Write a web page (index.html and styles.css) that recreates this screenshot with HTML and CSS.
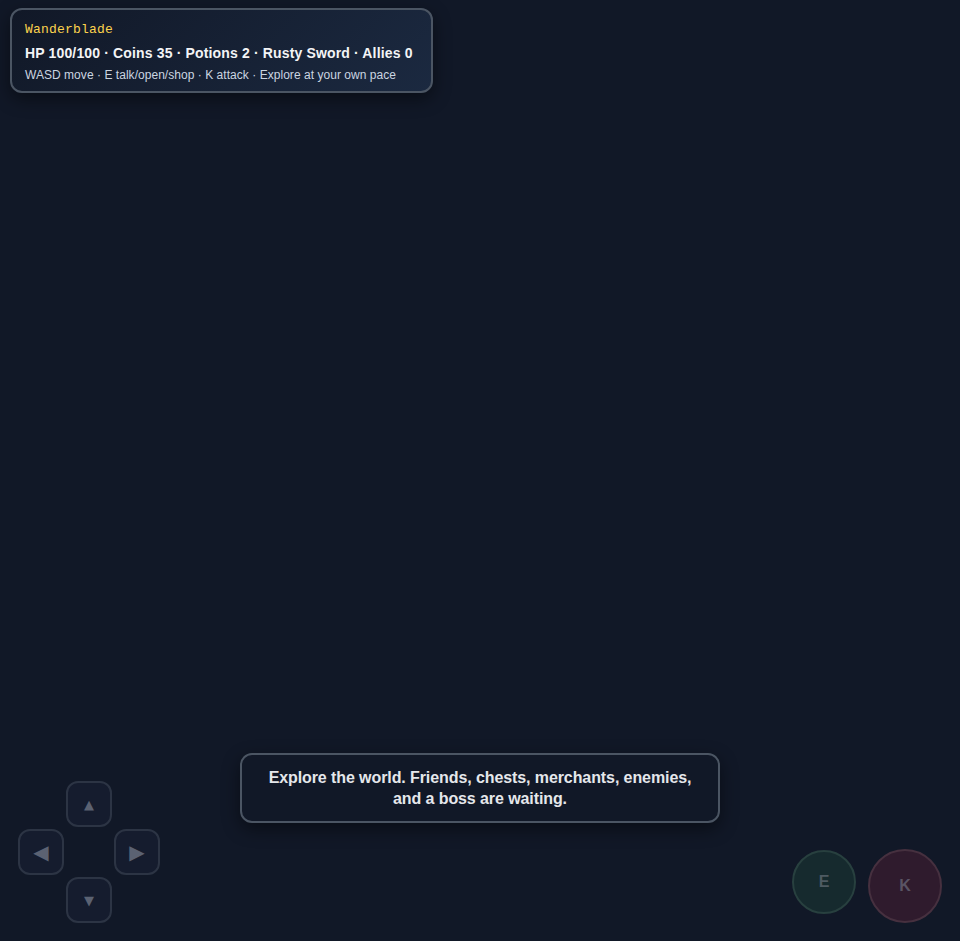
FILE: index.html
```html
<!DOCTYPE html>
<html lang="en">

<head>
    <meta charset="UTF-8" />
    <title>Wanderblade</title>
    <link rel="stylesheet" href="styles.css">
</head>

<body>

    <div class="game">
        <div class="hud">
            <div class="hud-title">Wanderblade</div>
            <div class="hud-stats">HP 100/100 · Coins 35 · Potions 2 · Rusty Sword · Allies 0</div>
            <div class="hud-help">WASD move · E talk/open/shop · K attack · Explore at your own pace</div>
        </div>

        <div class="message">Explore the world. Friends, chests, merchants, enemies,<br>and a boss are waiting.</div>

        <div class="dpad">
            <button class="pad up small">▲</button>
            <button class="pad left">◀</button>
            <button class="pad right">▶</button>
            <button class="pad down small">▼</button>
        </div>

        <div class="actions">
            <button class="act act-e">E</button>
            <button class="act act-k">K</button>
        </div>
    </div>

</body>

</html>
```

FILE: styles.css
```css
html,
body {
    margin: 0;
    height: 100%;
    background: #111827;
    font-family: "Liberation Sans", Arial, sans-serif;
    overflow: hidden;
}

.game {
    position: relative;
    width: 100%;
    height: 100%;
}

.hud {
    position: absolute;
    top: 8px;
    left: 10px;
    width: 423px;
    box-sizing: border-box;
    padding: 11px 13px 8px;
    border: 2px solid #4b5563;
    border-radius: 12px;
    background: linear-gradient(135deg, #111827, #1b2940);
    box-shadow: 0 6px 18px rgba(0, 0, 0, 0.45);
}

.hud-title {
    font-family: "Liberation Mono", monospace;
    font-size: 13px;
    letter-spacing: 0.2px;
    color: #fcd34d;
    line-height: 18px;
}

.hud-stats {
    margin-top: 5px;
    font-size: 14px;
    font-weight: bold;
    letter-spacing: 0.15px;
    color: #f3f4f6;
    line-height: 18px;
}

.hud-help {
    margin-top: 5px;
    font-size: 12px;
    letter-spacing: 0.04px;
    color: #cbd5e1;
    line-height: 16px;
}

.message {
    position: absolute;
    left: 240px;
    top: 753px;
    width: 480px;
    box-sizing: border-box;
    padding: 12px 16px;
    border: 2px solid #4b5563;
    border-radius: 12px;
    background: #111827;
    box-shadow: 0 6px 18px rgba(0, 0, 0, 0.45);
    color: #e5e7eb;
    font-size: 16px;
    font-weight: bold;
    letter-spacing: -0.09px;
    line-height: 21px;
    text-align: center;
}

.dpad {
    position: absolute;
    left: 18px;
    bottom: 18px;
    display: grid;
    grid-template-columns: repeat(3, 46px);
    grid-template-rows: repeat(3, 46px);
    gap: 2px;
}

.pad {
    width: 46px;
    height: 46px;
    padding: 0;
    border: 2px solid #2c3444;
    border-radius: 12px;
    background: #151c2e;
    color: #5b6272;
    font-family: "DejaVu Sans", sans-serif;
    font-size: 20px;
}

.pad.small {
    font-size: 13px;
}

.up { grid-column: 2; grid-row: 1; }
.left { grid-column: 1; grid-row: 2; }
.right { grid-column: 3; grid-row: 2; }
.down { grid-column: 2; grid-row: 3; }

.actions {
    position: absolute;
    right: 18px;
    bottom: 18px;
    display: flex;
    align-items: center;
    gap: 12px;
}

.act {
    padding: 0;
    border-radius: 50%;
    font-family: "Liberation Sans", Arial, sans-serif;
    font-weight: bold;
    font-size: 16px;
}

.act-e {
    width: 64px;
    height: 64px;
    margin-bottom: 9px;
    border: 2px solid #28403f;
    background: #162a2e;
    color: #4e5a62;
}

.act-k {
    width: 74px;
    height: 74px;
    border: 2px solid #46303f;
    background: #2f1b2d;
    color: #5a5464;
}
```
